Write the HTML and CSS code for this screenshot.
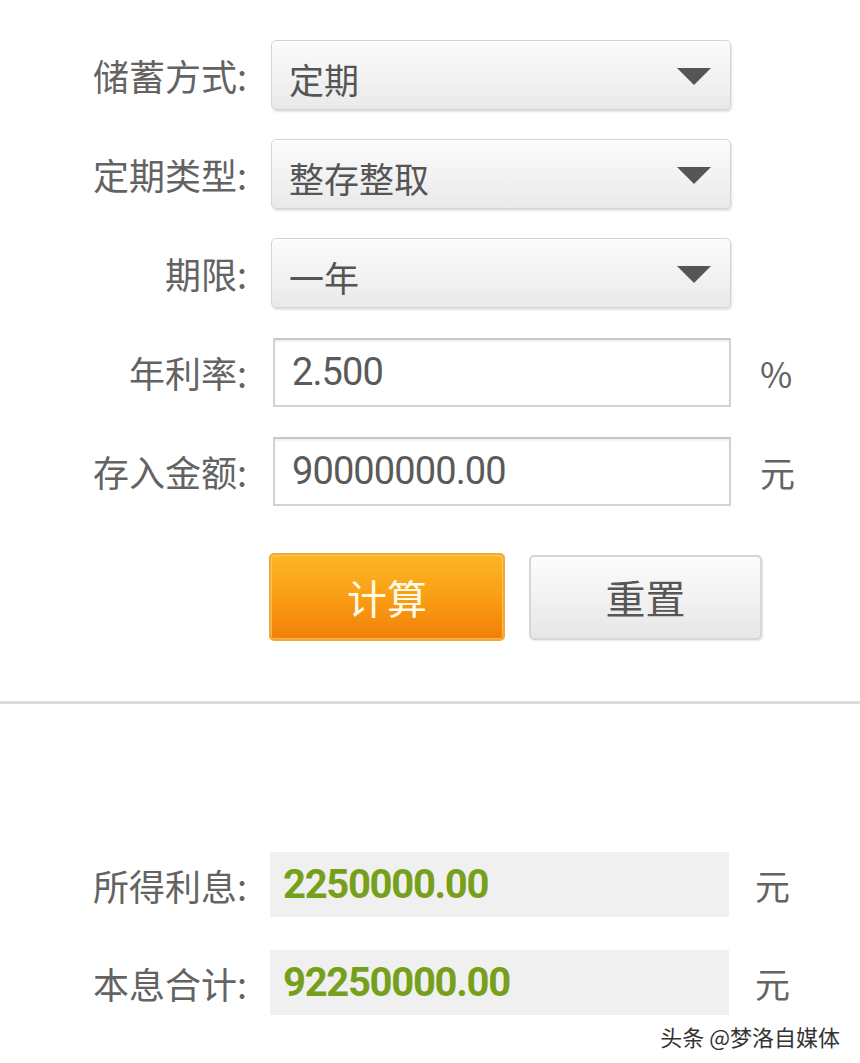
FILE: index.html
```html
<!DOCTYPE html>
<html lang="zh-CN">
<head>
<meta charset="utf-8">
<title>储蓄计算器</title>
<link rel="stylesheet" href="styles.css">
</head>
<body>
<div class="page">
  <form class="calc">
    <div class="row">
      <label class="label">储蓄方式:</label>
      <div class="select"><span class="select-text">定期</span><span class="arrow"></span></div>
      <span class="unit"></span>
    </div>
    <div class="row">
      <label class="label">定期类型:</label>
      <div class="select"><span class="select-text">整存整取</span><span class="arrow"></span></div>
      <span class="unit"></span>
    </div>
    <div class="row">
      <label class="label">期限:</label>
      <div class="select"><span class="select-text">一年</span><span class="arrow"></span></div>
      <span class="unit"></span>
    </div>
    <div class="row">
      <label class="label">年利率:</label>
      <div class="input"><span class="num">2.500</span></div>
      <span class="unit unit-in">%</span>
    </div>
    <div class="row">
      <label class="label">存入金额:</label>
      <div class="input"><span class="num">90000000.00</span></div>
      <span class="unit unit-in">元</span>
    </div>
    <div class="buttons">
      <button type="button" class="btn btn-primary">计算</button>
      <button type="button" class="btn btn-reset">重置</button>
    </div>
  </form>

  <hr class="divider">

  <div class="results">
    <div class="row row-result">
      <span class="label">所得利息:</span>
      <div class="result"><span class="result-num">2250000.00</span></div>
      <span class="unit">元</span>
    </div>
    <div class="row row-result">
      <span class="label">本息合计:</span>
      <div class="result"><span class="result-num">92250000.00</span></div>
      <span class="unit">元</span>
    </div>
  </div>

  <div class="watermark">头条 @梦洛自媒体</div>
</div>
</body>
</html>
```

FILE: styles.css
```css
* { box-sizing: border-box; }

html, body {
  margin: 0;
  padding: 0;
  background: #ffffff;
}

body {
  font-family: "Noto Sans CJK SC", "Noto Sans", sans-serif;
  color: #5f5f5f;
}

.page {
  position: relative;
  width: 860px;
  height: 1063px;
  overflow: hidden;
}

.calc {
  display: flex;
  flex-direction: column;
  gap: 29px;
  padding-top: 40px;
}

.row {
  display: grid;
  grid-template-columns: 247px 460px auto;
  column-gap: 24px;
  align-items: center;
  height: 70px;
}

.label {
  justify-self: end;
  font-size: 36px;
  line-height: 1;
  color: #636363;
  white-space: nowrap;
}

.select {
  height: 70px;
  border: 1px solid #d4d4d4;
  border-radius: 5px;
  background: linear-gradient(#fbfbfb 0%, #f2f2f2 55%, #e9e9e9 100%);
  box-shadow: 1px 2px 2px rgba(0, 0, 0, 0.12), inset 0 1px 0 #ffffff;
  display: flex;
  align-items: center;
  justify-content: space-between;
  padding: 6px 19px 0 17px;
}

.select-text {
  font-size: 35px;
  line-height: 1;
  color: #555555;
}

.arrow {
  width: 0;
  height: 0;
  border-left: 17px solid transparent;
  border-right: 17px solid transparent;
  border-top: 17px solid #555555;
  margin-top: -3px;
}

.input {
  height: 69px;
  margin-left: 2px;
  border: 2px solid #d2d2d2;
  border-top-color: #c8c8c8;
  background: #ffffff;
  box-shadow: inset 0 2px 2px rgba(0, 0, 0, 0.06);
  display: flex;
  align-items: center;
  padding-left: 17px;
}

.num {
  font-family: Roboto, "Noto Sans", sans-serif;
  font-size: 38px;
  letter-spacing: -0.9px;
  line-height: 1;
  color: #5a5a5a;
}

.unit {
  font-size: 35px;
  line-height: 1;
  color: #636363;
}

.unit-in {
  margin-left: 5px;
}

.buttons {
  display: flex;
  gap: 24px;
  margin-top: 18px;
  padding-left: 269px;
  align-items: center;
}

.btn {
  font-family: "Noto Sans CJK SC", sans-serif;
  font-size: 40px;
  line-height: 1;
  border-radius: 5px;
  cursor: pointer;
  padding: 0;
}

.btn-primary {
  width: 236px;
  height: 88px;
  color: #fffbe8;
  border: 2px solid #f0a83a;
  background: linear-gradient(#fdb624 0%, #f9a116 45%, #f27f06 100%);
  box-shadow: inset 0 0 0 1px rgba(255, 220, 120, 0.55);
}

.btn-reset {
  width: 233px;
  height: 85px;
  color: #575757;
  border: 2px solid #d6d6d6;
  background: linear-gradient(#fcfcfc 0%, #f2f2f2 50%, #e6e6e6 100%);
  box-shadow: 1px 1px 2px rgba(0, 0, 0, 0.1);
}

.divider {
  margin: 60px 0 0 0;
  border: 0;
  height: 3px;
  background: #dcdcdc;
}

.results {
  display: flex;
  flex-direction: column;
  gap: 33px;
  padding-top: 148px;
}

.row-result {
  height: 65px;
}

.result {
  height: 65px;
  width: 459px;
  background: #f0f0f0;
  display: flex;
  align-items: center;
  padding-left: 13px;
  margin-left: -1px;
}

.result-num {
  font-family: Roboto, "Noto Sans", sans-serif;
  font-weight: 700;
  font-size: 40px;
  letter-spacing: -1.3px;
  line-height: 1;
  color: #76a01c;
}

.watermark {
  position: absolute;
  right: 20px;
  bottom: 16px;
  font-size: 22px;
  line-height: 1;
  color: #333333;
  text-shadow: 0 0 2px #ffffff, 0 0 2px #ffffff;
}
```
